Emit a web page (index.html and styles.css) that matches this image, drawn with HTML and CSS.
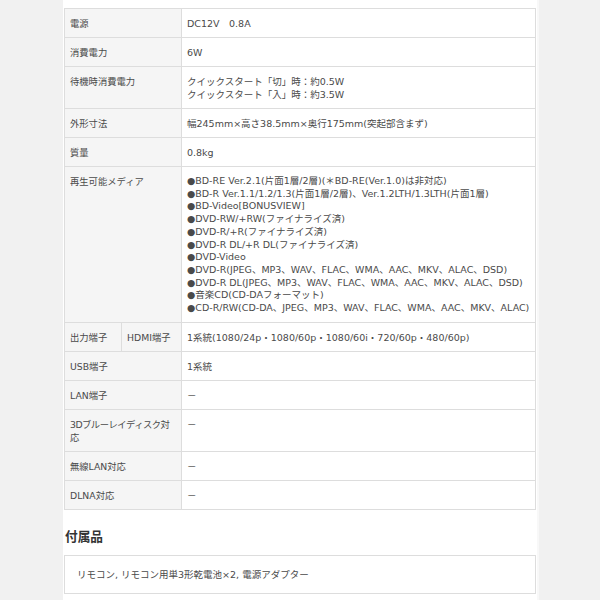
FILE: index.html
```
<!DOCTYPE html>
<html lang="ja">
<head>
  <meta charset="UTF-8">
  <title>仕様</title>
  <link rel="stylesheet" href="styles.css">
</head>
<body>
  <div class="main">
    <table class="spec">
      <tr><th colspan="2">電源</th><td>DC12V　0.8A</td></tr>
      <tr><th colspan="2">消費電力</th><td>6W</td></tr>
      <tr><th colspan="2">待機時消費電力</th><td>クイックスタート「切」時：約0.5W<br>クイックスタート「入」時：約3.5W</td></tr>
      <tr><th colspan="2">外形寸法</th><td>幅245mm×高さ38.5mm×奥行175mm(突起部含まず)</td></tr>
      <tr><th colspan="2">質量</th><td>0.8kg</td></tr>
      <tr><th colspan="2">再生可能メディア</th><td class="list">●BD-RE Ver.2.1(片面1層/2層)(＊BD-RE(Ver.1.0)は非対応)<br>●BD-R Ver.1.1/1.2/1.3(片面1層/2層)、Ver.1.2LTH/1.3LTH(片面1層)<br>●BD-Video[BONUSVIEW]<br>●DVD-RW/+RW(ファイナライズ済)<br>●DVD-R/+R(ファイナライズ済)<br>●DVD-R DL/+R DL(ファイナライズ済)<br>●DVD-Video<br>●DVD-R(JPEG、MP3、WAV、FLAC、WMA、AAC、MKV、ALAC、DSD)<br>●DVD-R DL(JPEG、MP3、WAV、FLAC、WMA、AAC、MKV、ALAC、DSD)<br>●音楽CD(CD-DAフォーマット)<br>●CD-R/RW(CD-DA、JPEG、MP3、WAV、FLAC、WMA、AAC、MKV、ALAC)</td></tr>
      <tr><th class="sub">出力端子</th><th class="sub">HDMI端子</th><td>1系統(1080/24p・1080/60p・1080/60i・720/60p・480/60p)</td></tr>
      <tr><th colspan="2">USB端子</th><td>1系統</td></tr>
      <tr><th colspan="2">LAN端子</th><td>－</td></tr>
      <tr><th colspan="2" class="tight">3Dブルーレイディスク対応</th><td>－</td></tr>
      <tr><th colspan="2">無線LAN対応</th><td>－</td></tr>
      <tr><th colspan="2">DLNA対応</th><td>－</td></tr>
    </table>
    <h2>付属品</h2>
    <div class="box">リモコン, リモコン用単3形乾電池×2, 電源アダプター</div>
  </div>
</body>
</html>
```
FILE: styles.css
```
body {
  margin: 0;
  background: #f1f1f1;
  color: #4a4a4a;
  font-family: "DejaVu Sans", "Noto Sans CJK JP", sans-serif;
}
.main {
  width: 474px;
  margin: 0 auto;
  padding: 8px 1px 20px;
  background: #fff;
  min-height: 600px;
  box-sizing: border-box;
  box-shadow: 2px 0 0 #f8f8f8;
}
.spec {
  width: 100%;
  border-collapse: collapse;
  font-size: 9.5px;
  line-height: 13px;
}
.spec th,
.spec td {
  border: 1px solid #ddd;
  padding: 8px 5px 7px;
  vertical-align: top;
  text-align: left;
  font-weight: normal;
}
.spec th {
  background: #f5f5f5;
  width: 106px;
  font-size: 9.3px;
}
.spec th.sub:first-child {
  width: 46px;
}
.spec th.sub + th.sub {
  width: 49px;
}
.spec th.tight {
  letter-spacing: -0.5px;
}
.spec td {
  background: #fff;
}
.spec td.list {
  line-height: 12.7px;
  padding-top: 8px;
}
h2 {
  margin: 16px 1px 10px;
  font-size: 12.7px;
  font-weight: bold;
  color: #333;
  font-family: "Noto Sans CJK JP", sans-serif;
}
.box {
  border: 1px solid #ddd;
  padding: 12px;
  font-size: 9.5px;
  line-height: 13px;
}
```
